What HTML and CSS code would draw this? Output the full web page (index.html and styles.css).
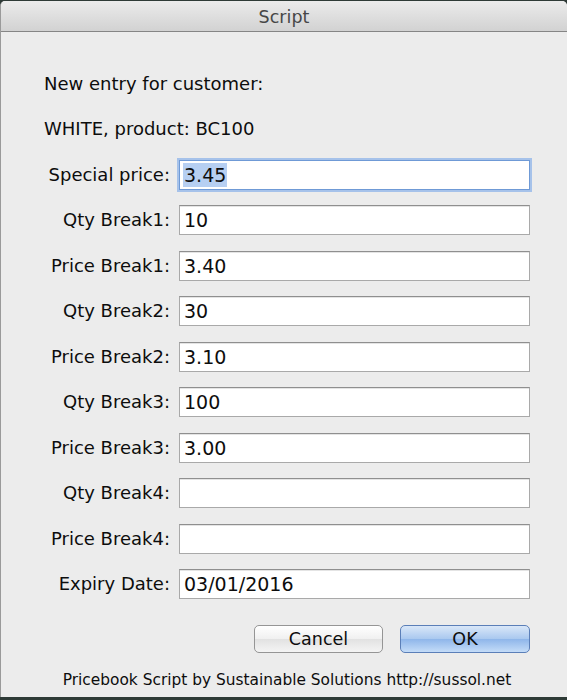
FILE: index.html
```html
<!DOCTYPE html>
<html>
<head>
<meta charset="utf-8">
<title>Script</title>
<link rel="stylesheet" href="styles.css">
</head>
<body>
<div class="window">
  <div class="titlebar">Script</div>
  <div class="content">
    <p class="msg msg-first">New entry for customer:</p>
    <p class="msg msg-second">WHITE, product: BC100</p>
    <div class="form">
      <label class="label">Special price:</label>
      <div class="field focused"><span class="selected">3.45</span></div>
      <label class="label">Qty Break1:</label>
      <div class="field">10</div>
      <label class="label">Price Break1:</label>
      <div class="field">3.40</div>
      <label class="label">Qty Break2:</label>
      <div class="field">30</div>
      <label class="label">Price Break2:</label>
      <div class="field">3.10</div>
      <label class="label">Qty Break3:</label>
      <div class="field">100</div>
      <label class="label">Price Break3:</label>
      <div class="field">3.00</div>
      <label class="label">Qty Break4:</label>
      <div class="field"></div>
      <label class="label">Price Break4:</label>
      <div class="field"></div>
      <label class="label">Expiry Date:</label>
      <div class="field">03/01/2016</div>
    </div>
    <div class="buttons">
      <div class="btn">Cancel</div>
      <div class="btn btn-default">OK</div>
    </div>
    <div class="footer">Pricebook Script by Sustainable Solutions http://sussol.net</div>
  </div>
</div>
</body>
</html>
```
FILE: styles.css
```css
html, body {
  margin: 0;
  padding: 0;
}
body {
  width: 567px;
  height: 700px;
  background: #2e3a36;
  font-family: "DejaVu Sans", "Liberation Sans", sans-serif;
  color: #0d0d0d;
  overflow: hidden;
}
.window {
  margin-top: 1px;
  height: 696px;
  background: #ececec;
  border-left: 1px solid #9a9a9a;
  border-radius: 5px 5px 0 0;
  box-sizing: border-box;
  overflow: hidden;
}
.titlebar {
  height: 31px;
  box-sizing: border-box;
  background: linear-gradient(#ebebeb, #d2d2d2);
  border-bottom: 1px solid #858585;
  text-align: center;
  font-size: 17.5px;
  line-height: 32px;
  color: #474747;
}
.content {
  padding: 0 0 0 43px;
}
.msg {
  margin: 0;
  font-size: 18px;
  line-height: 22px;
}
.msg-first {
  padding-top: 41px;
}
.msg-second {
  padding-top: 23px;
}
.form {
  margin-top: 20px;
  display: grid;
  grid-template-columns: 126px 351px;
  column-gap: 9px;
  row-gap: 15.44px;
}
.label {
  font-size: 18px;
  line-height: 30px;
  text-align: right;
  white-space: nowrap;
}
.field {
  height: 30px;
  box-sizing: border-box;
  background: #fff;
  border: 1px solid #a9a9a9;
  border-top-color: #8f8f8f;
  box-shadow: inset 0 1px 0 #e4e4e4;
  padding-left: 4px;
  font-size: 19px;
  line-height: 28px;
  color: #0d0d0d;
}
.field.focused {
  border: 1px solid #6f9ad6;
  box-shadow: 0 0 0 2px #a6c2ea;
  padding-left: 3px;
}
.selected {
  background: #b6cff2;
  padding: 1px 1px;
}
.buttons {
  display: flex;
  justify-content: flex-end;
  gap: 17px;
  width: 486px;
  margin-top: 26px;
}
.btn {
  width: 129px;
  height: 28px;
  box-sizing: border-box;
  border: 1px solid #959595;
  border-radius: 5px;
  background: linear-gradient(#ffffff, #f0f0f0 50%, #e2e2e2 51%, #f4f4f4);
  text-align: center;
  font-size: 17.5px;
  line-height: 26px;
  color: #0d0d0d;
}
.btn-default {
  width: 130px;
  border-color: #5b7fb8;
  background: linear-gradient(#d9e7f8, #a9c8ef 50%, #8fb6ea 51%, #c4dcf8);
}
.footer {
  margin-top: 17px;
  width: 486px;
  text-align: center;
  font-size: 15.4px;
  line-height: 20px;
  color: #0d0d0d;
}
```
